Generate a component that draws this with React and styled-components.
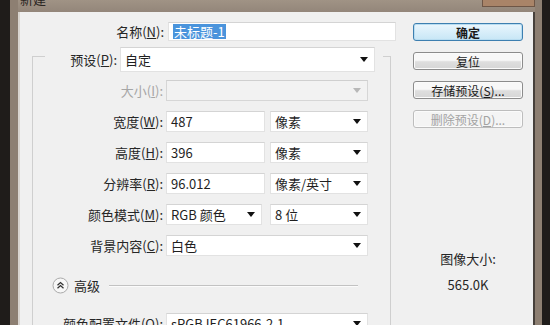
import styled, { createGlobalStyle } from "styled-components";

const Global = createGlobalStyle`
  html, body { margin: 0; padding: 0; background: #1f1c1a; }
  body { font-family: "Noto Sans CJK SC", "Noto Sans", sans-serif; }
`;

const Screen = styled.div`
  width: 550px;
  height: 325px;
  overflow: hidden;
  box-sizing: border-box;
  padding: 0 8px 0 10px;
  background: #1f1c1a;
`;

const Frame = styled.div`
  height: 100%;
  display: flex;
  flex-direction: column;
  border-left: 8px solid #8d7f72;
  border-right: 7px solid #8d7f72;
  background: #8d7f72;
`;

const TitleBar = styled.div`
  height: 12px;
  flex: none;
  display: flex;
  align-items: flex-end;
  justify-content: space-between;
  overflow: hidden;
  background: linear-gradient(#a09385, #93867a);
`;

const Title = styled.div`
  font-size: 13px;
  line-height: 13px;
  color: #2a2623;
  padding-left: 2px;
  margin-bottom: 7px;
`;

const CloseBox = styled.div`
  width: 51px;
  height: 6px;
  align-self: flex-start;
  background: #a98468;
  border: 1px solid #6e5646;
  border-top: none;
`;

const Client = styled.div`
  flex: 1;
  display: flex;
  background: #f0f0f0;
  border-left: 2px solid #d9d4cf;
  border-right: 2px solid #47413c;
  padding-top: 10px;
`;

const FormColumn = styled.div`
  width: 380px;
  flex: none;
  display: flex;
  flex-direction: column;
`;

const Row = styled.div`
  display: flex;
  align-items: center;
  height: ${(p) => p.$h || 21}px;
  margin-top: ${(p) => p.$mt || 0}px;
  gap: 3px;
`;

const Label = styled.div`
  width: ${(p) => p.$w}px;
  flex: none;
  text-align: right;
  font-size: 13px;
  white-space: nowrap;
  color: ${(p) => (p.$disabled ? "#a6a6a6" : "#262626")};
  u { text-decoration: underline; }
`;

const Field = styled.div`
  width: ${(p) => p.$w}px;
  height: ${(p) => p.$h || 21}px;
  flex: none;
  box-sizing: border-box;
  margin-left: ${(p) => p.$ml || 0}px;
  display: flex;
  align-items: center;
  justify-content: space-between;
  padding: 0 6px 0 4px;
  font-size: 13px;
  color: #1f1f1f;
  background: ${(p) => (p.$disabled ? "#f2f2f2" : "#ffffff")};
  border: 1px solid ${(p) => (p.$disabled ? "#d6d6d6" : "#e2e2e2")};
  border-top-color: ${(p) => (p.$disabled ? "#cfcfcf" : "#d4d4d4")};
  white-space: nowrap;
  overflow: hidden;
`;

const Arrow = styled.span`
  width: 0;
  height: 0;
  flex: none;
  border-left: 4px solid transparent;
  border-right: 4px solid transparent;
  border-top: 5px solid ${(p) => (p.$disabled ? "#b8b8b8" : "#111")};
`;

const Selected = styled.span`
  background: #4a94dc;
  color: #ffffff;
  line-height: 15px;
  padding: 0 1px;
`;

const Group = styled.fieldset`
  margin: 0 0 0 12px;
  width: 359px;
  box-sizing: border-box;
  padding: 0;
  border: 1px solid #cfcfcf;
  border-bottom: none;
  min-width: 0;
  flex: 1;
`;

const Legend = styled.legend`
  margin-left: 12px;
  padding: 6px 8px 0 0;
  display: flex;
  align-items: center;
  gap: 3px;
`;

const Advanced = styled.div`
  display: grid;
  grid-template-columns: 17px 26px 253px;
  align-items: center;
  column-gap: 5px;
  height: 17px;
  margin-top: 20px;
  padding-left: 19px;
  font-size: 13px;
  color: #262626;
`;

const Rule = styled.div`
  height: 0;
  margin-left: 4px;
  border-top: 1px solid #c2c2c2;
  border-bottom: 1px solid #fbfbfb;
`;

const SideColumn = styled.div`
  margin-left: 13px;
  width: 110px;
  display: flex;
  flex-direction: column;
  align-items: stretch;
  padding-top: 1px;
`;

const Button = styled.div`
  height: 18px;
  margin-top: ${(p) => p.$mt || 0}px;
  box-sizing: border-box;
  display: flex;
  align-items: center;
  justify-content: center;
  font-size: 12px;
  border-radius: 3px;
  color: ${(p) => (p.$disabled ? "#a3a3a3" : "#1a1a1a")};
  font-weight: ${(p) => (p.$primary ? 600 : 400)};
  border: 1px solid
    ${(p) => (p.$primary ? "#3d7fb0" : p.$disabled ? "#bdbdbd" : "#8c8c8c")};
  background: ${(p) =>
    p.$primary
      ? "linear-gradient(#eaf6fd, #c7e6f6)"
      : p.$disabled
      ? "#f4f4f4"
      : "linear-gradient(#f8f8f8 45%, #dedede 55%, #d6d6d6)"};
  box-shadow: ${(p) =>
    p.$primary ? "inset 0 0 0 1px #b9ddf1" : "inset 0 0 0 1px #fbfbfb"};
`;

const SizeInfo = styled.div`
  margin-top: 121px;
  display: flex;
  flex-direction: column;
  align-items: center;
  gap: 7px;
  font-size: 13px;
  color: #262626;
`;

function ExpandIcon() {
  return (
    <svg width="17" height="17" viewBox="0 0 17 17" style={{ display: "block" }}>
      <circle cx="8.5" cy="8.5" r="7.5" fill="#f7f7f7" stroke="#aaaaaa" />
      <path d="M5.5 8.3 L8.5 5.6 L11.5 8.3 M5.5 11.3 L8.5 8.6 L11.5 11.3" fill="none" stroke="#333" strokeWidth="1.3" />
    </svg>
  );
}

function Select({ w, ml, h, disabled, children }) {
  return (
    <Field $w={w} $ml={ml} $h={h} $disabled={disabled}>
      <span>{children}</span>
      <Arrow $disabled={disabled} />
    </Field>
  );
}

export default function App() {
  return (
    <Screen>
      <Global />
      <Frame>
        <TitleBar>
          <Title>新建</Title>
          <CloseBox />
        </TitleBar>
        <Client>
          <FormColumn>
            <Row $h={19} $mt={0}>
              <Label $w={144}>名称(<u>N</u>):</Label>
              <Field $w={228} $h={19} $ml={1}>
                <Selected>未标题-1</Selected>
              </Field>
            </Row>
            <Group>
              <Legend>
                <Label $w={72}>预设(<u>P</u>):</Label>
                <Select w={255} h={25}>自定</Select>
              </Legend>
              <Row $mt={8}>
                <Label $w={130} $disabled>大小(<u>I</u>):</Label>
                <Select w={202} disabled />
              </Row>
              <Row $mt={10}>
                <Label $w={130}>宽度(<u>W</u>):</Label>
                <Field $w={99}>487</Field>
                <Select w={98} ml={2}>像素</Select>
              </Row>
              <Row $mt={10}>
                <Label $w={130}>高度(<u>H</u>):</Label>
                <Field $w={99}>396</Field>
                <Select w={98} ml={2}>像素</Select>
              </Row>
              <Row $mt={10}>
                <Label $w={130}>分辨率(<u>R</u>):</Label>
                <Field $w={99}>96.012</Field>
                <Select w={98} ml={2}>像素/英寸</Select>
              </Row>
              <Row $mt={10}>
                <Label $w={130}>颜色模式(<u>M</u>):</Label>
                <Select w={96}>RGB 颜色</Select>
                <Select w={98} ml={5}>8 位</Select>
              </Row>
              <Row $mt={10}>
                <Label $w={130}>背景内容(<u>C</u>):</Label>
                <Select w={202}>白色</Select>
              </Row>
              <Advanced>
                <ExpandIcon />
                <span>高级</span>
                <Rule />
              </Advanced>
              <Row $mt={20}>
                <Label $w={130}>颜色配置文件(<u>O</u>):</Label>
                <Select w={202}>sRGB IEC61966-2.1</Select>
              </Row>
            </Group>
          </FormColumn>
          <SideColumn>
            <Button $primary>确定</Button>
            <Button $mt={11}>复位</Button>
            <Button $mt={11}>存储预设(<u>S</u>)...</Button>
            <Button $mt={11} $disabled>删除预设(<u>D</u>)...</Button>
            <SizeInfo>
              <span>图像大小:</span>
              <span>565.0K</span>
            </SizeInfo>
          </SideColumn>
        </Client>
      </Frame>
    </Screen>
  );
}
